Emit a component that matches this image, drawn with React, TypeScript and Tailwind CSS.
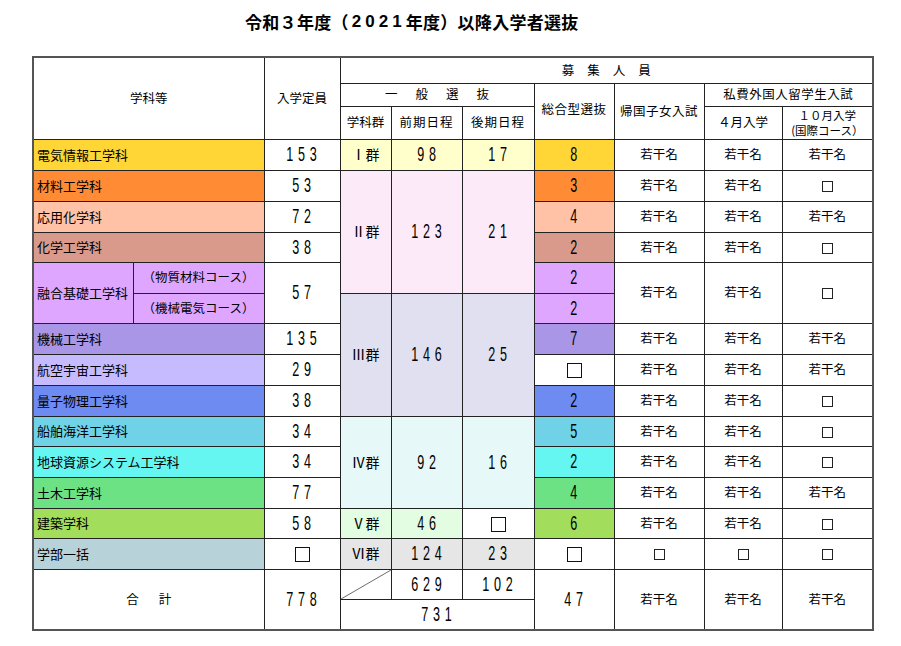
const Y = '若干名'

function Num({ v, big = false }: { v: string; big?: boolean }) {
  return (
    <span
      className={
        big
          ? "inline-block scale-x-[0.6] pl-[3px] text-[21px] leading-none tracking-[3px] font-['Liberation_Sans',sans-serif]"
          : "inline-block scale-x-[0.6] pl-[8px] text-[21px] leading-none tracking-[8px] font-['Liberation_Sans',sans-serif]"
      }
    >
      {v}
    </span>
  )
}

function Box({ big = false }: { big?: boolean }) {
  return (
    <span
      className={
        big
          ? 'inline-block w-[15px] h-[15px] border-[1.5px] border-[#111] align-middle'
          : 'inline-block w-[11px] h-[11px] border border-[#222] align-middle'
      }
    />
  )
}

const td = 'border border-[#222] text-center align-middle p-0'
const grp = 'border border-[#222] text-center align-middle p-0 text-[14px]'
const name = 'border border-[#222] text-left align-middle pl-[3px] text-[13px]'

export default function App() {
  return (
    <div className="w-[901px] h-[646px] bg-white text-black font-['Noto_Sans_CJK_JP',sans-serif]">
      <div className="h-[44px] pl-[245px] flex items-center text-[17px] font-bold tracking-[0.3px]">
        令和３年度（<span className="tracking-[4px] font-['Liberation_Sans',sans-serif] pl-[3px]">2021</span>年度）以降入学者選抜
      </div>
      <table className="ml-[32px] mt-[12px] w-[840px] table-fixed border-collapse border-2 border-[#555] text-[12.5px]">
        <colgroup>
          <col className="w-[100px]" />
          <col className="w-[131px]" />
          <col className="w-[76px]" />
          <col className="w-[51px]" />
          <col className="w-[71px]" />
          <col className="w-[72px]" />
          <col className="w-[80px]" />
          <col className="w-[90px]" />
          <col className="w-[78px]" />
          <col className="w-[91px]" />
        </colgroup>
        <tbody>
          <tr className="h-[26px]">
            <td className={td} colSpan={2} rowSpan={3}>学科等</td>
            <td className={td} rowSpan={3}>入学定員</td>
            <td className={`${td} tracking-[13px] pl-[13px]`} colSpan={7}>募集人員</td>
          </tr>
          <tr className="h-[23px]">
            <td className={`${td} tracking-[18px] pl-[18px]`} colSpan={3}>一般選抜</td>
            <td className={`${td} pb-[4px] tracking-[0.5px]`} rowSpan={2}>総合型選抜</td>
            <td className={`${td} tracking-[0.5px]`} rowSpan={2}>帰国子女入試</td>
            <td className={`${td} tracking-[0.5px]`} colSpan={2}>私費外国人留学生入試</td>
          </tr>
          <tr className="h-[33px]">
            <td className={td}>学科群</td>
            <td className={`${td} tracking-[1px]`}>前期日程</td>
            <td className={`${td} tracking-[1px]`}>後期日程</td>
            <td className={td}>４月入学</td>
            <td className={`${td} leading-[15px] text-[11.5px]`}>
              <div>１０月入学</div>
              <div>(国際コース）</div>
            </td>
          </tr>

          <tr className="h-[31px]">
            <td className={`${name} bg-[#FFD636]`} colSpan={2}>電気情報工学科</td>
            <td className={td}><Num v="153" /></td>
            <td className={`${grp} bg-[#FFFFCC]`}>Ⅰ群</td>
            <td className={`${td} bg-[#FFFFCC]`}><Num v="98" /></td>
            <td className={`${td} bg-[#FFFFCC]`}><Num v="17" /></td>
            <td className={`${td} bg-[#FFD636]`}><Num v="8" big /></td>
            <td className={td}>{Y}</td>
            <td className={td}>{Y}</td>
            <td className={td}>{Y}</td>
          </tr>
          <tr className="h-[31px]">
            <td className={`${name} bg-[#FF8C35]`} colSpan={2}>材料工学科</td>
            <td className={td}><Num v="53" /></td>
            <td className={`${grp} bg-[#FDEAF8]`} rowSpan={4}>Ⅱ群</td>
            <td className={`${td} bg-[#FDEAF8]`} rowSpan={4}><Num v="123" /></td>
            <td className={`${td} bg-[#FDEAF8]`} rowSpan={4}><Num v="21" /></td>
            <td className={`${td} bg-[#FF8C35]`}><Num v="3" big /></td>
            <td className={td}>{Y}</td>
            <td className={td}>{Y}</td>
            <td className={td}><Box /></td>
          </tr>
          <tr className="h-[31px]">
            <td className={`${name} bg-[#FFC2A6]`} colSpan={2}>応用化学科</td>
            <td className={td}><Num v="72" /></td>
            <td className={`${td} bg-[#FFC2A6]`}><Num v="4" big /></td>
            <td className={td}>{Y}</td>
            <td className={td}>{Y}</td>
            <td className={td}>{Y}</td>
          </tr>
          <tr className="h-[30px]">
            <td className={`${name} bg-[#D99A8C]`} colSpan={2}>化学工学科</td>
            <td className={td}><Num v="38" /></td>
            <td className={`${td} bg-[#D99A8C]`}><Num v="2" big /></td>
            <td className={td}>{Y}</td>
            <td className={td}>{Y}</td>
            <td className={td}><Box /></td>
          </tr>
          <tr className="h-[31px]">
            <td className={`${name} bg-[#DEA6FF]`} rowSpan={2}>融合基礎工学科</td>
            <td className={`${td} bg-[#DEA6FF]`}>（物質材料コース）</td>
            <td className={td} rowSpan={2}><Num v="57" /></td>
            <td className={`${td} bg-[#DEA6FF]`}><Num v="2" big /></td>
            <td className={td} rowSpan={2}>{Y}</td>
            <td className={td} rowSpan={2}>{Y}</td>
            <td className={td} rowSpan={2}><Box /></td>
          </tr>
          <tr className="h-[30px]">
            <td className={`${td} bg-[#DEA6FF]`}>（機械電気コース）</td>
            <td className={`${grp} bg-[#E0E0F0]`} rowSpan={4}>Ⅲ群</td>
            <td className={`${td} bg-[#E0E0F0]`} rowSpan={4}><Num v="146" /></td>
            <td className={`${td} bg-[#E0E0F0]`} rowSpan={4}><Num v="25" /></td>
            <td className={`${td} bg-[#DEA6FF]`}><Num v="2" big /></td>
          </tr>
          <tr className="h-[31px]">
            <td className={`${name} bg-[#A996E6]`} colSpan={2}>機械工学科</td>
            <td className={td}><Num v="135" /></td>
            <td className={`${td} bg-[#A996E6]`}><Num v="7" big /></td>
            <td className={td}>{Y}</td>
            <td className={td}>{Y}</td>
            <td className={td}>{Y}</td>
          </tr>
          <tr className="h-[31px]">
            <td className={`${name} bg-[#C6BBFF]`} colSpan={2}>航空宇宙工学科</td>
            <td className={td}><Num v="29" /></td>
            <td className={td}><Box big /></td>
            <td className={td}>{Y}</td>
            <td className={td}>{Y}</td>
            <td className={td}>{Y}</td>
          </tr>
          <tr className="h-[31px]">
            <td className={`${name} bg-[#6E8BF2]`} colSpan={2}>量子物理工学科</td>
            <td className={td}><Num v="38" /></td>
            <td className={`${td} bg-[#6E8BF2]`}><Num v="2" big /></td>
            <td className={td}>{Y}</td>
            <td className={td}>{Y}</td>
            <td className={td}><Box /></td>
          </tr>
          <tr className="h-[30px]">
            <td className={`${name} bg-[#70D2E6]`} colSpan={2}>船舶海洋工学科</td>
            <td className={td}><Num v="34" /></td>
            <td className={`${grp} bg-[#E6F8F8]`} rowSpan={3}>Ⅳ群</td>
            <td className={`${td} bg-[#E6F8F8]`} rowSpan={3}><Num v="92" /></td>
            <td className={`${td} bg-[#E6F8F8]`} rowSpan={3}><Num v="16" /></td>
            <td className={`${td} bg-[#70D2E6]`}><Num v="5" big /></td>
            <td className={td}>{Y}</td>
            <td className={td}>{Y}</td>
            <td className={td}><Box /></td>
          </tr>
          <tr className="h-[31px]">
            <td className={`${name} bg-[#66F6F2]`} colSpan={2}>地球資源システム工学科</td>
            <td className={td}><Num v="34" /></td>
            <td className={`${td} bg-[#66F6F2]`}><Num v="2" big /></td>
            <td className={td}>{Y}</td>
            <td className={td}>{Y}</td>
            <td className={td}><Box /></td>
          </tr>
          <tr className="h-[31px]">
            <td className={`${name} bg-[#6CE285]`} colSpan={2}>土木工学科</td>
            <td className={td}><Num v="77" /></td>
            <td className={`${td} bg-[#6CE285]`}><Num v="4" big /></td>
            <td className={td}>{Y}</td>
            <td className={td}>{Y}</td>
            <td className={td}>{Y}</td>
          </tr>
          <tr className="h-[30px]">
            <td className={`${name} bg-[#A3DD5C]`} colSpan={2}>建築学科</td>
            <td className={td}><Num v="58" /></td>
            <td className={`${grp} bg-[#E2FDE2]`}>Ⅴ群</td>
            <td className={`${td} bg-[#E2FDE2]`}><Num v="46" /></td>
            <td className={td}><Box big /></td>
            <td className={`${td} bg-[#A3DD5C]`}><Num v="6" big /></td>
            <td className={td}>{Y}</td>
            <td className={td}>{Y}</td>
            <td className={td}><Box /></td>
          </tr>
          <tr className="h-[31px]">
            <td className={`${name} bg-[#B8D2DA]`} colSpan={2}>学部一括</td>
            <td className={td}><Box big /></td>
            <td className={`${grp} bg-[#E6E6E6]`}>Ⅵ群</td>
            <td className={`${td} bg-[#E6E6E6]`}><Num v="124" /></td>
            <td className={`${td} bg-[#E6E6E6]`}><Num v="23" /></td>
            <td className={td}><Box big /></td>
            <td className={td}><Box /></td>
            <td className={td}><Box /></td>
            <td className={td}><Box /></td>
          </tr>
          <tr className="h-[30px]">
            <td className={`${td} tracking-[20px] pl-[20px]`} colSpan={2} rowSpan={2}>合計</td>
            <td className={td} rowSpan={2}><Num v="778" /></td>
            <td className={`${td} relative`}>
              <svg className="absolute inset-0 w-full h-full" preserveAspectRatio="none" viewBox="0 0 50 30">
                <line x1="0" y1="30" x2="50" y2="0" stroke="#444" strokeWidth="0.8" />
              </svg>
            </td>
            <td className={td}><Num v="629" /></td>
            <td className={td}><Num v="102" /></td>
            <td className={td} rowSpan={2}><Num v="47" /></td>
            <td className={td} rowSpan={2}>{Y}</td>
            <td className={td} rowSpan={2}>{Y}</td>
            <td className={td} rowSpan={2}>{Y}</td>
          </tr>
          <tr className="h-[31px]">
            <td className={td} colSpan={3}><Num v="731" /></td>
          </tr>
        </tbody>
      </table>
    </div>
  )
}
